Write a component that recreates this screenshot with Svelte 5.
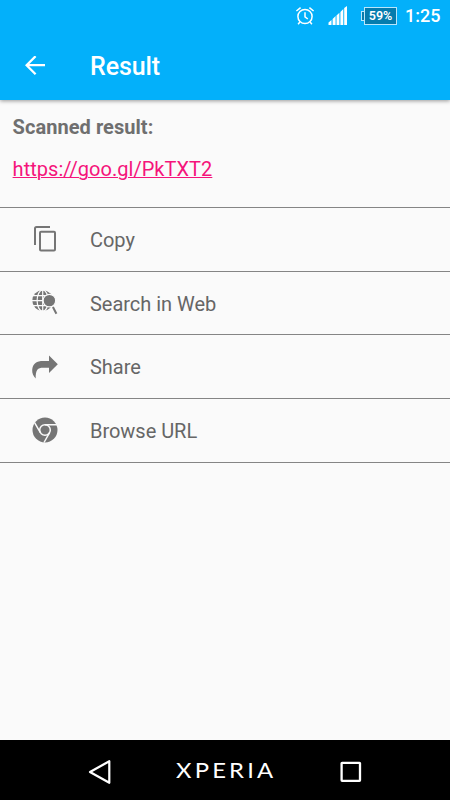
<script>
  const scannedUrl = 'https://goo.gl/PkTXT2';

  const actions = [
    { id: 'copy', label: 'Copy' },
    { id: 'search', label: 'Search in Web' },
    { id: 'share', label: 'Share' },
    { id: 'browse', label: 'Browse URL' },
  ];
</script>

<div class="screen">
  <header>
    <div class="status-bar">
      <svg class="alarm" width="20" height="20" viewBox="0 0 20 20">
        <g fill="none" stroke="#fff" stroke-width="1.5">
          <circle cx="10" cy="10.5" r="7.1" />
          <path d="M10 6.3v4.5l2.8 2.2" />
          <path d="M1.4 5L5.6 1.6M14.4 1.6l4.2 3.4M4.9 16l-1.8 2.2M15.1 16l1.8 2.2" />
        </g>
      </svg>
      <svg class="signal" width="20" height="20" viewBox="0 0 20 20" fill="#fff">
        <path d="M0.5 19v-2.5L3.5 14v5zM4.6 19v-6L7.6 10v9zM8.5 19V9.5l2.9-2.8V19zM12.4 19V6l2.9-3v16zM16.2 19V2L19 0v19z" />
      </svg>
      <div class="battery">59%</div>
      <span class="clock">1:25</span>
    </div>

    <div class="toolbar">
      <button class="back" aria-label="Back">
        <svg width="20" height="20" viewBox="0 0 20 20">
          <path d="M20 9.2H1.8M10.6 0.2L1.6 9.2l9 9" fill="none" stroke="#fff" stroke-width="2.3" />
        </svg>
      </button>
      <h1>Result</h1>
    </div>
  </header>

  <main>
    <section class="result">
      <h2>Scanned result:</h2>
      <a href={scannedUrl}>{scannedUrl}</a>
    </section>

    <ul>
      {#each actions as action (action.id)}
        <li>
          <svg width="30" height="30" viewBox="0 0 30 30">
            {#if action.id === 'copy'}
              <g fill="none" stroke="#757575" stroke-width="2">
                <path d="M5 21V4.5Q5 3 6.5 3H20" />
                <rect x="10" y="7.8" width="15" height="18.8" rx="1" />
              </g>
            {:else if action.id === 'search'}
              <circle cx="12.7" cy="12.6" r="10.4" fill="#757575" />
              <g fill="none" stroke="#fafafa" stroke-width="1.2">
                <path d="M12.7 2v21M2 12.6h21M3 7.6h19M3 17.7h19" />
                <ellipse cx="12.7" cy="12.6" rx="5.6" ry="10.6" />
              </g>
              <circle cx="19.4" cy="12.6" r="6.3" fill="#757575" stroke="#fafafa" stroke-width="1.2" />
              <path d="M22.9 19l3.5 6.8" stroke="#757575" stroke-width="2" />
            {:else if action.id === 'share'}
              <path
                d="M19 3.5l8.8 8.7-8.8 8.7v-5.2h-6c-5 0-7.6 2-7.3 10.9C3.2 24 2 21.5 2.2 17.8 2.6 11.3 7 8.9 13 8.9h6z"
                fill="#757575"
              />
            {:else}
              <circle cx="15" cy="15" r="12.5" fill="#757575" />
              <g fill="none" stroke="#fafafa" stroke-width="1.5">
                <circle cx="15" cy="15" r="5.3" />
                <path d="M15 9.7h12M10.4 17.6L4.7 7.8M19.6 17.6L14 27.5" />
              </g>
            {/if}
          </svg>
          <span>{action.label}</span>
        </li>
      {/each}
    </ul>
  </main>

  <nav>
    <svg class="nav-back" width="24" height="26" viewBox="0 0 24 26">
      <path d="M2 13L21.3 2.2v21.6z" fill="none" stroke="#fff" stroke-width="2.2" stroke-linejoin="round" />
    </svg>
    <span class="brand">XPERIA</span>
    <svg class="nav-recent" width="22" height="22" viewBox="0 0 22 22">
      <rect x="1.6" y="1.8" width="18.4" height="18" rx="0.5" fill="none" stroke="#fff" stroke-width="2.3" />
    </svg>
  </nav>
</div>

<style>
  :global(body) {
    margin: 0;
    font-family: Roboto, sans-serif;
  }

  .screen {
    display: flex;
    flex-direction: column;
    width: 450px;
    height: 800px;
    background: #fafafa;
    overflow: hidden;
  }

  header {
    height: 100px;
    background: #03b0fa;
    color: #fff;
    box-shadow: 0 1px 4px rgba(0, 0, 0, 0.4);
  }

  .status-bar {
    display: flex;
    align-items: center;
    justify-content: flex-end;
    height: 32px;
    padding-right: 9.5px;
  }

  .alarm {
    margin-right: 13px;
  }

  .signal {
    margin-right: 16px;
  }

  .battery {
    position: relative;
    box-sizing: border-box;
    width: 33px;
    height: 18px;
    margin-right: 8px;
    border: 1px solid #b9e6fb;
    background: #057cae;
    font-size: 12.5px;
    font-weight: 600;
    line-height: 16px;
    text-align: center;
  }

  .battery::before {
    content: '';
    position: absolute;
    left: -4px;
    top: 3px;
    width: 2px;
    height: 8px;
    border: 1px solid #b9e6fb;
    border-right: none;
    background: #057cae;
  }

  .clock {
    font-size: 18px;
    font-weight: 500;
    line-height: 20px;
  }

  .toolbar {
    display: flex;
    align-items: center;
    height: 68px;
    padding-left: 25px;
  }

  .back {
    width: 20px;
    height: 20px;
    margin-right: 45px;
    padding: 0;
    border: none;
    background: none;
  }

  .back svg {
    display: block;
  }

  h1 {
    margin: 0;
    font-size: 25px;
    font-weight: 500;
    letter-spacing: -0.1px;
  }

  main {
    flex: 1;
  }

  .result {
    box-sizing: border-box;
    height: 107px;
    padding: 15px 12.6px 0;
  }

  h2 {
    margin: 0 0 18px;
    color: #6f6f6f;
    font-size: 20px;
    font-weight: 700;
    line-height: 24px;
    letter-spacing: 0.05px;
  }

  .result a {
    display: block;
    color: #f5147b;
    font-size: 20px;
    line-height: 24px;
    letter-spacing: 0.04px;
    text-decoration-thickness: 1px;
  }

  ul {
    margin: 0;
    padding: 0;
    border-top: 1px solid #858585;
    list-style: none;
  }

  li {
    display: flex;
    align-items: center;
    gap: 30px;
    box-sizing: border-box;
    height: 63.7px;
    padding-left: 30px;
    border-bottom: 1px solid #858585;
    color: #666;
    font-size: 20px;
    letter-spacing: -0.03px;
  }

  li span {
    padding-top: 1px;
  }

  nav {
    display: flex;
    align-items: center;
    height: 60px;
    padding-left: 88px;
    background: #000;
    color: #fff;
  }

  .nav-back {
    margin-top: 4px;
  }

  /* wide wordmark */
  .brand {
    width: 101px;
    margin: 0 63px 2px 64px;
    font-family: Lato, sans-serif;
    font-size: 21px;
    letter-spacing: 2.8px;
    transform: scaleX(1.135);
    transform-origin: left;
  }

  .nav-recent {
    margin-top: 4px;
  }
</style>
